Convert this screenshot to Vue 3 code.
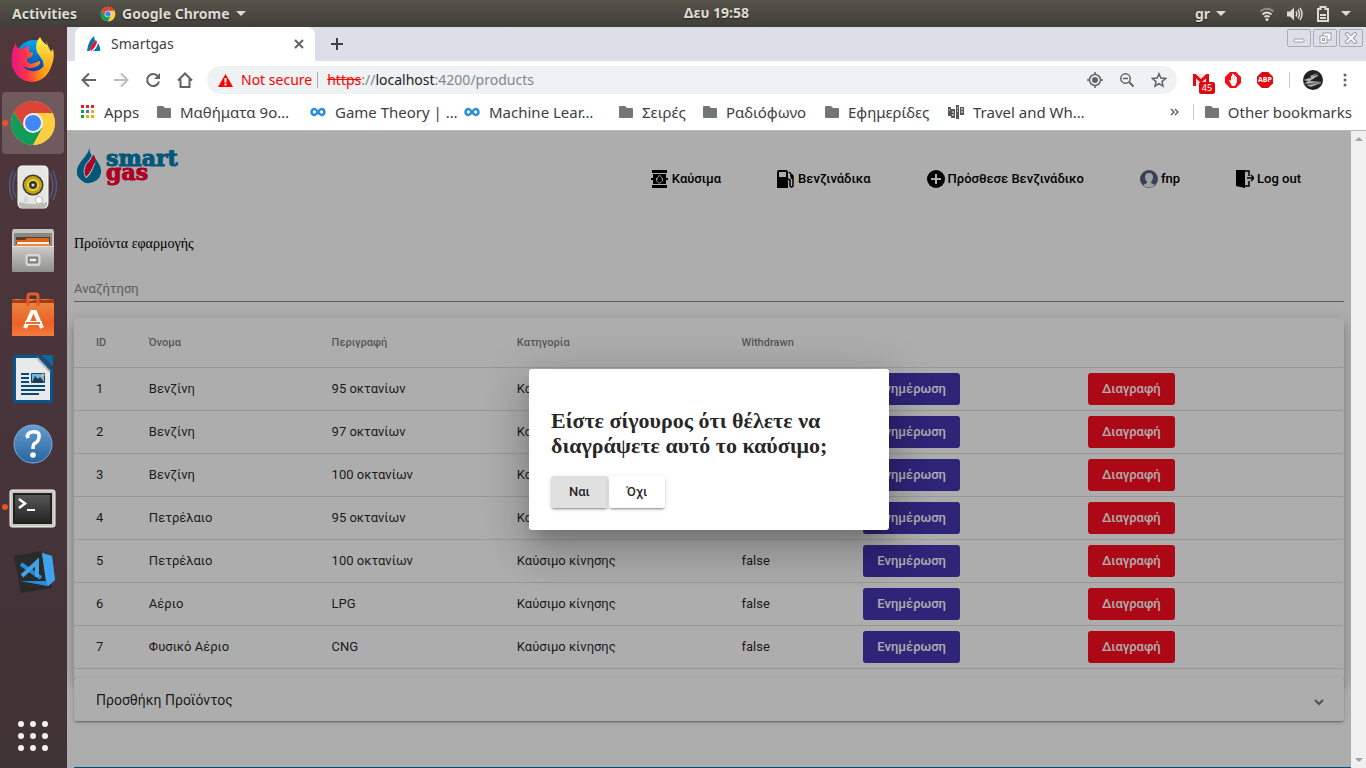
<script setup>
import { ref } from 'vue'

const products = [
  { id: 1, name: 'Βενζίνη', description: '95 οκτανίων', category: 'Καύσιμο κίνησης', withdrawn: 'false' },
  { id: 2, name: 'Βενζίνη', description: '97 οκτανίων', category: 'Καύσιμο κίνησης', withdrawn: 'false' },
  { id: 3, name: 'Βενζίνη', description: '100 οκτανίων', category: 'Καύσιμο κίνησης', withdrawn: 'false' },
  { id: 4, name: 'Πετρέλαιο', description: '95 οκτανίων', category: 'Καύσιμο κίνησης', withdrawn: 'false' },
  { id: 5, name: 'Πετρέλαιο', description: '100 οκτανίων', category: 'Καύσιμο κίνησης', withdrawn: 'false' },
  { id: 6, name: 'Αέριο', description: 'LPG', category: 'Καύσιμο κίνησης', withdrawn: 'false' },
  { id: 7, name: 'Φυσικό Αέριο', description: 'CNG', category: 'Καύσιμο κίνησης', withdrawn: 'false' }
]

const bookmarks = [
  { icon: 'apps', label: 'Apps' },
  { icon: 'folder', label: 'Μαθήματα 9ο…' },
  { icon: 'coursera', label: 'Game Theory | …' },
  { icon: 'coursera', label: 'Machine Lear…' },
  { icon: 'folder', label: 'Σειρές' },
  { icon: 'folder', label: 'Ραδιόφωνο' },
  { icon: 'folder', label: 'Εφημερίδες' },
  { icon: 'travel', label: 'Travel and Wh…' }
]

const appColors = ['#e8202a', '#e8202a', '#e8202a', '#1a9c4b', '#2f7de1', '#f6a800', '#1a9c4b', '#f6a800', '#f6a800']
const search = ref('')
</script>

<template>
  <div class="desktop">
    <header class="panel">
      <div class="panel-left">
        <button class="panel-btn">Activities</button>
        <button class="panel-btn app-menu">
          <svg width="16" height="16" viewBox="0 0 48 48"><use href="#chrome-logo" /></svg>
          <span>Google Chrome</span>
          <i class="caret"></i>
        </button>
      </div>
      <button class="panel-btn clock">Δευ 19:58</button>
      <div class="panel-right">
        <button class="panel-btn lang">gr <i class="caret"></i></button>
        <svg class="tray-wifi" width="16" height="16" viewBox="0 0 16 16" fill="none" stroke="#dfdbd2" stroke-width="2">
          <path d="M1.5 5.5Q8 0 14.500 5.500" opacity=".45" /><path d="M3.500 8.500Q8 4.500 12.500 8.500" /><path d="M5.500 11Q8 9 10.500 11" />
          <circle cx="8" cy="13.500" r="1.500" fill="#dfdbd2" stroke="none" />
        </svg>
        <svg class="tray-volume" width="16" height="16" viewBox="0 0 16 16" fill="none" stroke="#dfdbd2" stroke-width="1.500">
          <path d="M0 5.500h3L7 1.500v13L3 10.500H0z" fill="#dfdbd2" stroke="none" />
          <path d="M9 5.500q1.500 2.500 0 5M11 3.500q3 4.500 0 9M13 1.800q4 6.200 0 12.400" />
        </svg>
        <svg class="tray-battery" width="12" height="16" viewBox="0 0 12 16" fill="none" stroke="#dfdbd2" stroke-width="2">
          <path d="M1 3h2.500V1h5v2H11v12H1zM3 9h6M3 12h6" />
        </svg>
        <i class="caret"></i>
      </div>
    </header>

    <div class="workspace">
      <nav class="dock" aria-label="Dock">
        <button class="dock-item" aria-label="Firefox">
          <svg viewBox="0 0 48 48">
            <defs>
              <linearGradient id="fx" x1="0" y1=".5" x2="1" y2=".4"><stop offset="0" stop-color="#e31587" /><stop offset=".35" stop-color="#ff3647" /><stop offset=".65" stop-color="#ff9010" /><stop offset="1" stop-color="#ffd22c" /></linearGradient>
              <linearGradient id="fxb" x1="0" y1="0" x2="0" y2="1"><stop offset="0" stop-color="#00a8f0" /><stop offset="1" stop-color="#0b2f9c" /></linearGradient>
              <linearGradient id="fxy" x1="0" y1="0" x2="0" y2="1"><stop offset="0" stop-color="#fff44f" /><stop offset="1" stop-color="#ff980e" /></linearGradient>
            </defs>
            <circle cx="25" cy="23" r="18" fill="url(#fxb)" />
            <path d="M7 8q0 4 2 5l5 1q4-3 7-3-2 3-1 6l4 1q0 4-5 5-2 1-1 3 2 4 7 2l6-2q1 4-5 6-7 3-13-2 7 9 17 5 9-5 9-15l5-6q2 8-1 15-5 17-20 18Q8 46 3 31 1 17 7 8z" fill="url(#fx)" />
            <path d="M31 2q-6 7-3 15l6 9 1 8-3 5q8-2 11-10 2-6 0-10l-4-8-2-6 1 5q-5-3-7-8z" fill="url(#fxy)" />
          </svg>
        </button>
        <button class="dock-item active running" aria-label="Google Chrome">
          <svg viewBox="0 0 48 48">
            <g id="chrome-logo">
              <circle cx="24" cy="24" r="22" fill="#fecd40" />
              <path d="M24 24 5 13A22 22 0 0 1 43 13.500z" fill="#db4437" />
              <path d="M5 13A22 22 0 0 0 24 46L34 29 24 24 15 29z" fill="#0f9d58" />
              <path d="M5 13 15 29 24 14H43.500A22 22 0 0 0 5 13z" fill="#db4437" />
              <path d="M33 29 24 46A22 22 0 0 0 43.500 14H24z" fill="#fecd40" />
              <circle cx="24" cy="24" r="10" fill="#f4f4f4" /><circle cx="24" cy="24" r="8" fill="#4285f4" />
            </g>
          </svg>
        </button>
        <button class="dock-item" aria-label="Rhythmbox">
          <svg viewBox="0 0 48 48">
            <g fill="none" stroke="#4f6fa5" stroke-width="1.500" opacity=".65"><path d="M4 8q-7 15 0 29M7 10q-6 13 0 25M44 8q7 15 0 29M41 10q6 13 0 25" /></g>
            <path d="M13 3h22q4 0 4 5v32q0 5-4 5H13q-4 0-4-5V8q0-5 4-5z" fill="#e6e6e3" stroke="#fafafa" />
            <path d="M10 39q14 4 28 0v3q-1 3-4 3H14q-3 0-4-3z" fill="#bdbdb8" />
            <circle cx="24" cy="22" r="10.500" fill="#3a3a37" /><circle cx="24" cy="22" r="9" fill="#c5a316" /><circle cx="24" cy="22" r="6" fill="#eed232" /><circle cx="24" cy="22" r="4" fill="#34352f" /><circle cx="24" cy="22" r="1.500" fill="#ddd" />
            <circle cx="30" cy="37" r="3.500" fill="#fff" stroke="#b4b4b4" /><path d="M15 34h4v5h-4z" fill="#d3d3d1" />
          </svg>
        </button>
        <button class="dock-item" aria-label="Files">
          <svg viewBox="0 0 48 48">
            <defs><linearGradient id="fl" x1="0" y1="0" x2="0" y2="1"><stop offset="0" stop-color="#cbcbc8" /><stop offset="1" stop-color="#919190" /></linearGradient></defs>
            <path d="M4 2h40l1 3v38H3V5z" fill="#c4c4c1" /><path d="M5 6h38v16H5z" fill="#888885" /><path d="M7 10h34v10H7z" fill="#5a3a2b" />
            <path d="M7 13h9l2-2h22v4H7z" fill="#df641d" /><path d="M8 15h32v2H8z" fill="#fff4e5" /><path d="M7 17h34v2H7z" fill="#ee8544" />
            <path d="M3 19h42v25q0 1-1 1H4q-1 0-1-1z" fill="url(#fl)" /><path d="M3 19.500h42" stroke="#e6e6e4" />
            <rect x="17.500" y="28" width="13" height="10" rx="2" fill="#aaa" stroke="#d9d9d9" stroke-width="2" /><rect x="20" y="31" width="8" height="4" fill="#eee" stroke="#555" />
          </svg>
        </button>
        <button class="dock-item" aria-label="Ubuntu Software">
          <svg viewBox="0 0 48 48">
            <defs><linearGradient id="sw" x1="0" y1="0" x2="0" y2="1"><stop offset="0" stop-color="#e88a45" /><stop offset=".65" stop-color="#ed6125" /><stop offset="1" stop-color="#f37b42" /></linearGradient></defs>
            <path d="M3 8h42v37H3z" fill="url(#sw)" /><path d="M3 12V8l5 1 8-1 6 2 7-2 6 1 10-1v4z" fill="#a73c12" />
            <path d="M19 15V5q0-2 2-2h6q2 0 2 2v10" fill="none" stroke="#e75a2b" stroke-width="3" />
            <path d="m16 37 7-16h3l7 16M16 32h17" stroke="#fff" stroke-width="4" fill="none" /><path d="M17 32h14" stroke="#ed6b24" stroke-width="2" />
          </svg>
        </button>
        <button class="dock-item" aria-label="LibreOffice Writer">
          <svg viewBox="0 0 48 48">
            <path d="M7 0h23l14 14v31q0 3-3 3H7q-3 0-3-3V3q0-3 3-3z" fill="#09568f" /><path d="M32 0h10q2 0 2 2v10z" fill="#0b68a3" />
            <path d="M7 3h21l13 14v28H7z" fill="#e9e9e9" /><path d="M28 3v0l13 14" stroke="#bbb" stroke-width="2" />
            <path d="M12 19h8M12 23h8M12 27h8M12 31h24M12 35h24M12 39h18" stroke="#074a78" stroke-width="2" />
            <path d="M22.500 18.500h13v9h-13z" fill="#74b8e2" stroke="#074a78" /><path d="m23 27 3-6 3 3 2-2 4 5z" fill="#263846" /><circle cx="34" cy="20" r="1.500" fill="#efcb39" />
          </svg>
        </button>
        <button class="dock-item" aria-label="Help">
          <svg viewBox="0 0 48 48">
            <defs><linearGradient id="hp" x1="0" y1="0" x2="0" y2="1"><stop offset="0" stop-color="#659dcd" /><stop offset="1" stop-color="#2864a0" /></linearGradient></defs>
            <circle cx="24" cy="25" r="19" fill="url(#hp)" stroke="#80acd6" /><path d="M19 19q-2-5 4-6 8-1 7 5 0 4-5 7-1 1-1 5" fill="none" stroke="#fff" stroke-width="3.500" /><circle cx="18.500" cy="17" r="2" fill="#fff" /><circle cx="24" cy="36" r="2.800" fill="#fff" />
          </svg>
        </button>
        <button class="dock-item running" aria-label="Terminal">
          <svg viewBox="0 0 48 48">
            <defs><linearGradient id="tm" x1="0" y1="0" x2="0" y2="1"><stop offset="0" stop-color="#555" /><stop offset="1" stop-color="#262626" /></linearGradient></defs>
            <rect x="1" y="7" width="45" height="37" rx="2" fill="#c7c7c3" stroke="#f4f4f2" /><path d="M4 10h39v31H4z" fill="#20211f" /><path d="M6 12h35v27H6z" fill="url(#tm)" />
            <path d="m10 16 6 4.500-6 4.500" fill="none" stroke="#fff" stroke-width="2.500" /><path d="M18 27h8" stroke="#fff" stroke-width="2" />
          </svg>
        </button>
        <button class="dock-item" aria-label="Visual Studio Code">
          <svg viewBox="0 0 48 48">
            <path d="m5 9 27-5 11 37-31 5z" fill="#2a2a2b" />
            <path d="m12 34 25 0 1 5z" fill="#1173b8" /><path d="m33 6 10 3 3 24-7 6-27-5 25 0z" fill="#2b8ad6" /><path d="m33 6 10 3 3 24-7 6-2-5z" fill="#41a1ea" />
            <path d="m12 17 20 14" stroke="#2b8ad6" stroke-width="4" /><path d="m13 29 15-14v15" fill="none" stroke="#41a1ea" stroke-width="4" />
          </svg>
        </button>
        <button class="dock-item show-apps" aria-label="Show Applications">
          <svg viewBox="0 0 48 48" fill="#f2f1ef">
            <template v-for="r in 3" :key="r"><circle v-for="c in 3" :key="c" :cx="c * 12" :cy="r * 12" r="3" /></template>
          </svg>
        </button>
      </nav>

      <div class="browser">
        <div class="tabstrip">
          <div class="tab">
            <svg width="16" height="16" viewBox="0 0 16 16"><path d="M8 0q-6 5-7 15h3q0-5 5-10z" fill="#007ba8" /><path d="M10 4q-6 5-6 9l1 2q5-4 6-9z" fill="#e4173c" /><path d="M12 7q3 5 2 8H7q4-3 5-8z" fill="#007ba8" /></svg>
            <span class="tab-title">Smartgas</span>
            <button class="icon-btn tab-close" aria-label="Close tab"><svg width="10" height="10" viewBox="0 0 10 10" stroke="#5f6368" stroke-width="2"><path d="m1 1 8 8M9 1 1 9" /></svg></button>
          </div>
          <button class="icon-btn new-tab" aria-label="New tab"><svg width="12" height="12" viewBox="0 0 12 12" stroke="#3c4043" stroke-width="2"><path d="M6 0v12M0 6h12" /></svg></button>
          <div class="win-controls">
            <button aria-label="Minimize"><svg width="14" height="12" viewBox="0 0 14 12"><rect x="2" y="7" width="10" height="3" rx="1" fill="#fff" stroke="#9a9da4" /></svg></button>
            <button aria-label="Restore"><svg width="14" height="12" viewBox="0 0 14 12" fill="#fff" stroke="#9a9da4"><rect x="5" y="1" width="8" height="7" /><rect x="2" y="4" width="7" height="7" /><rect x="4.500" y="6.500" width="2" height="2" /></svg></button>
            <button aria-label="Close"><svg width="14" height="12" viewBox="0 0 14 12"><path d="m3 2 8 8m0-8-8 8" stroke="#9a9da4" stroke-width="4" stroke-linecap="round" /><path d="m3 2 8 8m0-8-8 8" stroke="#fff" stroke-width="2" stroke-linecap="round" /></svg></button>
          </div>
        </div>

        <div class="toolbar">
          <button class="icon-btn tool" aria-label="Back"><svg width="16" height="16" viewBox="0 0 16 16" fill="none" stroke="#5f6368" stroke-width="2"><path d="M15 8H2M8 1.500 1.500 8 8 14.500" /></svg></button>
          <button class="icon-btn tool" aria-label="Forward"><svg width="16" height="16" viewBox="0 0 16 16" fill="none" stroke="#babcbe" stroke-width="2"><path d="M1 8h13M8 1.500 14.500 8 8 14.500" /></svg></button>
          <button class="icon-btn tool" aria-label="Reload"><svg width="16" height="16" viewBox="0 0 16 16" fill="none" stroke="#5f6368" stroke-width="2"><path d="M13 4.500A6 6 0 1 0 14 9.500" /><path d="M15 1v6H9z" fill="#5f6368" stroke="none" /></svg></button>
          <button class="icon-btn tool" aria-label="Home"><svg width="16" height="16" viewBox="0 0 16 16" fill="none" stroke="#5f6368" stroke-width="2"><path d="M1 8.500 8 1.500l7 7M3.500 7v8h9V7" /></svg></button>
          <div class="omnibox">
            <svg width="15" height="13" viewBox="0 0 15 13"><path d="M7.500 0 15 13H0z" fill="#f00" /><path d="M7.500 4v4.500M7.500 9.500v2" stroke="#fff" stroke-width="2" /></svg>
            <span class="not-secure">Not secure</span>
            <span class="omni-sep"></span>
            <span class="url"><s>https</s>://<b>localhost</b>:4200/products</span>
            <button class="icon-btn tool" aria-label="Location"><svg width="16" height="16" viewBox="0 0 16 16" fill="none" stroke="#5f6368" stroke-width="1.500"><circle cx="8" cy="8" r="5.500" /><circle cx="8" cy="8" r="3" fill="#5f6368" stroke="none" /><path d="M8 0v3M8 13v3M0 8h3M13 8h3" /></svg></button>
            <button class="icon-btn tool" aria-label="Zoom out"><svg width="16" height="16" viewBox="0 0 16 16" fill="none" stroke="#5f6368" stroke-width="1.500"><circle cx="6.500" cy="6.500" r="4.700" /><path d="M4 6.500h5" /><path d="m10 10 4.500 4.500" stroke-width="2" /></svg></button>
            <button class="icon-btn tool" aria-label="Bookmark"><svg width="16" height="16" viewBox="0 0 16 16" fill="none" stroke="#5f6368" stroke-width="1.500"><path d="m8 1.800 1.800 4.300 4.700.4-3.500 3.100 1 4.600-4-2.500-4 2.500 1-4.600-3.500-3.100 4.700-.4z" /></svg></button>
          </div>
          <div class="extensions">
            <button class="icon-btn tool mail" aria-label="Mail"><svg width="16" height="12" viewBox="0 0 16 12"><path d="M0 0h16v12H0z" fill="#f3e5e4" /><path d="M1.500 12V1L8 7l6.500-6v11" fill="none" stroke="#e00b10" stroke-width="3" /></svg><span class="badge">45</span></button>
            <button class="icon-btn tool" aria-label="AdBlock"><svg width="16" height="16" viewBox="0 0 16 16"><path d="M5 0h6l5 5v6l-5 5H5l-5-5V5z" fill="#f40d12" /><path d="M4 8h1l1 1V4h1V2h2v1h1v1h1v1h1v5l-2 4H7z" fill="#fff" /><path d="M7.500 4v4M9.500 4v4" stroke="#f9a0a0" stroke-width=".5" /></svg></button>
            <button class="icon-btn tool" aria-label="AdBlock Plus"><span class="abp">ABP</span></button>
            <span class="ext-sep"></span>
            <button class="icon-btn tool" aria-label="Profile"><svg width="20" height="20" viewBox="0 0 20 20"><circle cx="10" cy="10" r="10" fill="#202125" /><path d="m7 6 8-3-6 4 7-2-9 6 12 1-12 1-6 1 4-3-5-1 9-2zM3 15l15-2-10 4z" fill="#aaa" /><path d="m3 10 12-5M4 13h14" stroke="#ddd" stroke-width=".7" /></svg></button>
            <button class="icon-btn tool" aria-label="Menu"><svg width="4" height="16" viewBox="0 0 4 16" fill="#5f6368"><circle cx="2" cy="3" r="1.500" /><circle cx="2" cy="8" r="1.500" /><circle cx="2" cy="13" r="1.500" /></svg></button>
          </div>
        </div>

        <div class="bookmarks">
          <div class="bookmark-list">
            <a v-for="b in bookmarks" :key="b.label" class="bookmark" href="#">
              <svg v-if="b.icon === 'apps'" width="14" height="14" viewBox="0 0 14 14"><rect v-for="(c, i) in appColors" :key="i" :x="(i % 3) * 5" :y="Math.floor(i / 3) * 5" width="3" height="3" :fill="c" /></svg>
              <svg v-else-if="b.icon === 'folder'" width="14" height="12" viewBox="0 0 14 12"><path d="M1 0h5l2 2h5q1 0 1 1v8q0 1-1 1H1q-1 0-1-1V1q0-1 1-1z" fill="#737679" /></svg>
              <svg v-else-if="b.icon === 'coursera'" width="16" height="10" viewBox="0 0 16 10" fill="none" stroke="#2a8cd6" stroke-width="2.500"><path d="M8 5Q6 2 4.500 2A3 3 0 0 0 4.500 8Q6 8 8 5 10 2 11.500 2a3 3 0 0 1 0 6Q10 8 8 5" /></svg>
              <svg v-else width="16" height="16" viewBox="0 0 16 16" fill="#55585b"><path d="M0 3h3v9H0zM3 5h4v9H3zM8 1h3v14H8zM12 3h4v8h-4z" /><path d="M1 6h1M4 8h2M4 11h2M13 5h2M13 8h2M9 4h1M9 7h1" stroke="#fff" /></svg>
              <span>{{ b.label }}</span>
            </a>
          </div>
          <button class="icon-btn more" aria-label="More bookmarks"><svg width="9" height="8" viewBox="0 0 9 8" fill="none" stroke="#5f6368" stroke-width="1.500"><path d="m1 1 3 3-3 3M5 1l3 3-3 3" /></svg></button>
          <a class="bookmark other" href="#">
            <svg width="14" height="12" viewBox="0 0 14 12"><path d="M1 0h5l2 2h5q1 0 1 1v8q0 1-1 1H1q-1 0-1-1V1q0-1 1-1z" fill="#737679" /></svg>
            <span>Other bookmarks</span>
          </a>
        </div>

        <div class="viewport">
          <div class="page-wrap">
            <div class="page">
              <header class="site-header">
                <a class="logo" href="#">
                  <svg width="24" height="37" viewBox="0 0 24 37"><path d="M12.500 0Q12 5 6 12-5 25 3 32q7 8 17 1 7-6 2-16l-4-6q-1 13-8 20-7-8 6-22Q12 7 12.500 0z" fill="#0080b4" /><path d="M16 8q-1 4-6 9-4 7-1 13 6-6 9-16 1-5-2-6z" fill="#ff0035" /><path d="M15 8q-1 4-6 9-4 7 0 14 6-6 9-15" fill="none" stroke="#fff" /></svg>
                  <span class="wordmark"><span>smart</span><span class="gas">gas</span></span>
                </a>
                <nav class="site-nav">
                  <a href="#"><svg width="18" height="18" viewBox="0 0 18 18"><path d="M1 0h15v3H1zM1 15h15v3H1zM2 4h13v4H2zM2 10h13v4H2zM0 8h5v2H0zM12 8h5v2h-5z" /><path d="M8.500 5q-3 4-3 6 3 4 6 0 1-2-3-6z" stroke="#fff" stroke-width=".8" /></svg><span>Καύσιμα</span></a>
                  <a href="#"><svg width="18" height="18" viewBox="0 0 18 18"><path fill-rule="evenodd" d="M2 0h7q2 0 2 2v16H0V2q0-2 2-2zm0 2v5h7V2z" /><path d="m12 2 4 4v9q0 2-1.500 2T13 15v-5l-2-1" fill="none" stroke="#000" stroke-width="1.500" /><path d="M13 5h3v4h-2z" /></svg><span>Βενζινάδικα</span></a>
                  <a href="#"><svg width="18" height="18" viewBox="0 0 18 18"><circle cx="9" cy="9" r="9" /><path d="M9 4v10M4 9h10" stroke="#fff" stroke-width="2" /></svg><span>Πρόσθεσε Βενζινάδικο</span></a>
                  <a href="#"><svg width="18" height="18" viewBox="0 0 18 18"><circle cx="9" cy="9" r="9" fill="#556080" /><path d="M9 3q4 0 4 4 0 3-2 5v1l4 2q-6 5-12 0l4-2v-1Q5 10 5 7q0-4 4-4z" fill="#e7eced" /></svg><span>fnp</span></a>
                  <a href="#"><svg width="18" height="18" viewBox="0 0 18 18"><path d="M0 0h9v18l-9-2z" /><path d="M9 1h4v5M13 11v5H9M11 8h6m-2-3 3 3-3 3" fill="none" stroke="#000" stroke-width="1.500" /></svg><span>Log out</span></a>
                </nav>
              </header>

              <h1 class="page-title">Προϊόντα εφαρμογής</h1>
              <input v-model="search" class="search" type="text" placeholder="Αναζήτηση" aria-label="Αναζήτηση">

              <section class="table-card">
                <table>
                  <colgroup><col class="c-id"><col class="c-name"><col class="c-desc"><col class="c-cat"><col class="c-wd"><col class="c-edit"><col></colgroup>
                  <thead>
                    <tr><th>ID</th><th>Όνομα</th><th>Περιγραφή</th><th>Κατηγορία</th><th>Withdrawn</th><th></th><th></th></tr>
                  </thead>
                  <tbody>
                    <tr v-for="p in products" :key="p.id">
                      <td>{{ p.id }}</td><td>{{ p.name }}</td><td>{{ p.description }}</td><td>{{ p.category }}</td><td>{{ p.withdrawn }}</td>
                      <td class="action"><button class="btn edit">Ενημέρωση</button></td>
                      <td class="action"><button class="btn delete">Διαγραφή</button></td>
                    </tr>
                  </tbody>
                </table>
              </section>

              <button class="expansion">
                <span>Προσθήκη Προϊόντος</span>
                <svg width="10" height="7" viewBox="0 0 10 7" fill="none" stroke="#757575" stroke-width="2"><path d="m1 1 4 4 4-4" /></svg>
              </button>
              <div class="footer-line"></div>
            </div>

            <div class="overlay">
              <div class="dialog" role="dialog" aria-modal="true" aria-labelledby="dialog-title">
                <h2 id="dialog-title">Είστε σίγουρος ότι θέλετε να διαγράψετε αυτό το καύσιμο;</h2>
                <div class="dialog-actions">
                  <button class="raised focused">Ναι</button>
                  <button class="raised">Όχι</button>
                </div>
              </div>
            </div>
          </div>
          <div class="scrollbar"><i class="arrow up"></i><i class="arrow down"></i></div>
        </div>
      </div>
    </div>
  </div>
</template>

<style>
body { margin: 0; overflow: hidden; }
</style>

<style scoped>
* { box-sizing: border-box; }
button { font: inherit; color: inherit; border: 0; background: none; padding: 0; margin: 0; cursor: pointer; }
a { color: inherit; text-decoration: none; }
svg { display: block; flex: none; }

.desktop { height: 100vh; display: flex; flex-direction: column; font-family: "Noto Sans", sans-serif; font-size: 14px; }

.panel { flex: none; height: 27px; display: grid; grid-template-columns: 67px 1fr auto 1fr; align-items: center; background: linear-gradient(#57544b, #403e39); color: #dfdbd2; font-weight: 700; }
.panel-left { grid-column: 1 / 3; display: flex; align-items: center; padding-left: 12px; gap: 23px; }
.panel-btn { display: flex; align-items: center; white-space: nowrap; text-shadow: 0 1px 1px #222; }
.clock { padding-bottom: 2px; }
.app-menu { gap: 6px; }
.panel-right { display: flex; align-items: center; justify-content: flex-end; padding-right: 15px; }
.lang { gap: 6px; margin-right: 33px; }
.tray-volume { margin: 0 14px 0 12px; }
.tray-battery { margin: 0 12px 0 0; }
.caret { border: 5px solid transparent; border-top-color: #dfdbd2; border-bottom: 0; }

.workspace { flex: 1; min-height: 0; display: flex; }
.dock { flex: none; width: 67px; display: flex; flex-direction: column; background: linear-gradient(#50373a, #48343b 50%, #403336); }
.dock-item { position: relative; width: 62px; height: 62px; margin: 1px 2px; padding: 0 7px; border-radius: 4px; }
.dock-item svg { width: 48px; height: 48px; }
.dock-item.active { background: #6f5b5e; }
.running::before { content: ""; position: absolute; left: 0; top: 28px; width: 6px; height: 6px; border-radius: 3px; background: #e95420; }
.show-apps { margin-top: auto; }

.browser { flex: 1; min-width: 0; display: flex; flex-direction: column; background: #fff; color: #3c4043; }
.tabstrip { flex: none; height: 34px; display: flex; background: #dcdfe7; padding: 0 3px 0 8px; }
.tab { width: 240px; display: flex; align-items: center; background: #fff; border-radius: 8px 8px 0 0; padding: 0 8px 1px 11px; }
.tab-title { flex: 1; margin-left: 9px; padding-bottom: 1px; }
.icon-btn { display: flex; align-items: center; justify-content: center; flex: none; }
.tab-close { width: 16px; height: 16px; }
.new-tab { width: 32px; margin-left: 6px; }
.win-controls { margin-left: auto; display: flex; gap: 2px; padding-top: 2px; }
.win-controls button { width: 24px; height: 18px; border: 1px solid #a9acb4; border-radius: 2px; display: flex; align-items: center; justify-content: center; }

.toolbar { flex: none; height: 38px; display: flex; align-items: center; padding: 0 5px 0 6px; }
.tool { width: 32px; height: 28px; position: relative; }
.omnibox { flex: 1; min-width: 0; height: 28px; margin: 0 8px 0 6px; padding: 0 2px 0 11px; border-radius: 14px; background: #eff2f3; display: flex; align-items: center; white-space: nowrap; }
.not-secure { color: #f00; margin-left: 8px; padding-bottom: 2px; }
.omni-sep { width: 1px; height: 16px; background: #a9acae; margin: 0 9px 0 5px; }
.url { flex: 1; color: #80868b; padding-bottom: 2px; }
.url s { color: #f00; }
.url b { font-weight: 400; color: #202124; }
.extensions { display: flex; align-items: center; }
.badge { position: absolute; left: 14px; top: 16px; width: 16px; height: 12px; border-radius: 2px; background: #e00b10; color: #fff; font-size: 9px; line-height: 12px; text-align: center; }
.abp { width: 16px; height: 16px; background: #e30613; color: #fff; font: 700 7px/16px "Open Sans", sans-serif; clip-path: polygon(30% 0, 70% 0, 100% 30%, 100% 70%, 70% 100%, 30% 100%, 0 70%, 0 30%); }
.ext-sep { width: 1px; height: 16px; margin: 0 7px 0 8px; background: #c6c8ca; }

.bookmarks { flex: none; height: 32px; display: flex; align-items: center; padding: 0 14px 5px; border-bottom: 1px solid #b6b6b6; font-size: 15px; }
.bookmark-list { flex: 1; min-width: 0; display: grid; grid-template-columns: 76px 153px 154px 155px 84px 122px 123px 1fr; align-items: center; }
.bookmark { display: flex; align-items: center; gap: 9px; white-space: nowrap; }
.more { width: 28px; padding-right: 8px; }
.other { border-left: 1px solid #c6c8ca; padding-left: 11px; height: 16px; }

.viewport { flex: 1; min-height: 0; display: flex; }
.page-wrap { flex: 1; min-width: 0; position: relative; overflow: hidden; }
.page { height: 100%; display: flex; flex-direction: column; padding: 0 7px; background: #fff; font-family: Roboto, sans-serif; font-size: 13px; color: rgba(0, 0, 0, .87); }
.site-header { flex: none; height: 104px; display: flex; justify-content: space-between; align-items: flex-start; padding: 16px 43px 0 3px; }
.logo { display: flex; gap: 5px; }
.wordmark { display: flex; flex-direction: column; font: 700 22px/14px "DejaVu Serif", serif; color: #0080b4; padding-top: 4px; -webkit-text-stroke: 1px currentColor; }
.gas { color: #ff0035; }
.site-nav { display: flex; gap: 56px; padding-top: 22px; font-weight: 500; color: #000; }
.site-nav a { display: flex; align-items: center; gap: 3px; height: 20px; }
.site-nav span { padding-bottom: 2px; }
.page-title { margin: 0; font: 400 14px/18px "Liberation Serif", serif; color: #000; }
.search { flex: none; width: 100%; height: 26px; margin: 23px 0 16px; padding: 0; border: 0; border-bottom: 1px solid #8a8a8a; border-radius: 0; background: none; font: inherit; outline: none; }
.search::placeholder { color: #8a8a8a; opacity: 1; }

.table-card { flex: none; padding: 0 1px 9px 0; border-radius: 3px 3px 0 0; box-shadow: 0 5px 5px -3px rgba(0, 0, 0, .2), 0 8px 10px 1px rgba(0, 0, 0, .14), 0 3px 14px 2px rgba(0, 0, 0, .12); }
table { width: 100%; table-layout: fixed; border-collapse: separate; border-spacing: 0; }
th, td { padding: 0; height: 43px; text-align: left; border-bottom: 1px solid #e0e0e0; }
td { padding-bottom: 2px; }
td.action { padding-bottom: 0; }
th { height: 50px; font-size: 11px; font-weight: 500; color: rgba(0, 0, 0, .54); }
th:first-child, td:first-child { padding-left: 22px; }
.c-id { width: 5.9%; } .c-name { width: 14.4%; } .c-desc { width: 14.6%; } .c-cat { width: 17.7%; } .c-wd { width: 9.6%; } .c-edit { width: 17.7%; }
.btn { display: block; height: 32px; padding: 0 14px 2px; border-radius: 3px; color: #fff; font-weight: 500; }
.edit { background: #4435b2; }
.delete { background: #ff0c20; }

.expansion { position: relative; flex: none; height: 43px; display: flex; align-items: center; justify-content: space-between; padding: 0 20px 0 22px; border-radius: 3px; background: #fff; font-size: 14px; box-shadow: 0 3px 1px -2px rgba(0, 0, 0, .2), 0 2px 2px rgba(0, 0, 0, .14), 0 1px 5px rgba(0, 0, 0, .12); }
.expansion svg { margin-top: 5px; }
.footer-line { height: 1px; margin: auto -7px 0 0; background: #0078a4; }

.overlay { position: absolute; inset: 0; display: flex; align-items: center; justify-content: center; background: rgba(0, 0, 0, .32); }
.dialog { width: 360px; padding: 22px; border-radius: 3px; background: #fff; color: rgba(0, 0, 0, .87); box-shadow: 0 11px 15px -7px rgba(0, 0, 0, .2), 0 24px 38px 3px rgba(0, 0, 0, .14), 0 9px 46px 8px rgba(0, 0, 0, .12); }
.dialog h2 { margin: 17px 0 18px; font: 700 22px/25px "Liberation Serif", serif; }
.dialog-actions { display: flex; gap: 1px; }
.raised { height: 32px; padding: 0 18px 2px; border-radius: 3px; font: 500 13px Roboto, sans-serif; background: #fff; box-shadow: 0 3px 1px -2px rgba(0, 0, 0, .2), 0 2px 2px rgba(0, 0, 0, .14), 0 1px 5px rgba(0, 0, 0, .12); }
.focused { background: #e0e0e0; }

.scrollbar { flex: none; width: 15px; display: flex; flex-direction: column; align-items: center; justify-content: space-between; padding: 6px 0; background: #f0f0f0; }
.arrow { border: 4px solid transparent; }
.up { border-bottom-color: #a3a3a3; border-top: 0; }
.down { border-top-color: #a3a3a3; border-bottom: 0; }
</style>
